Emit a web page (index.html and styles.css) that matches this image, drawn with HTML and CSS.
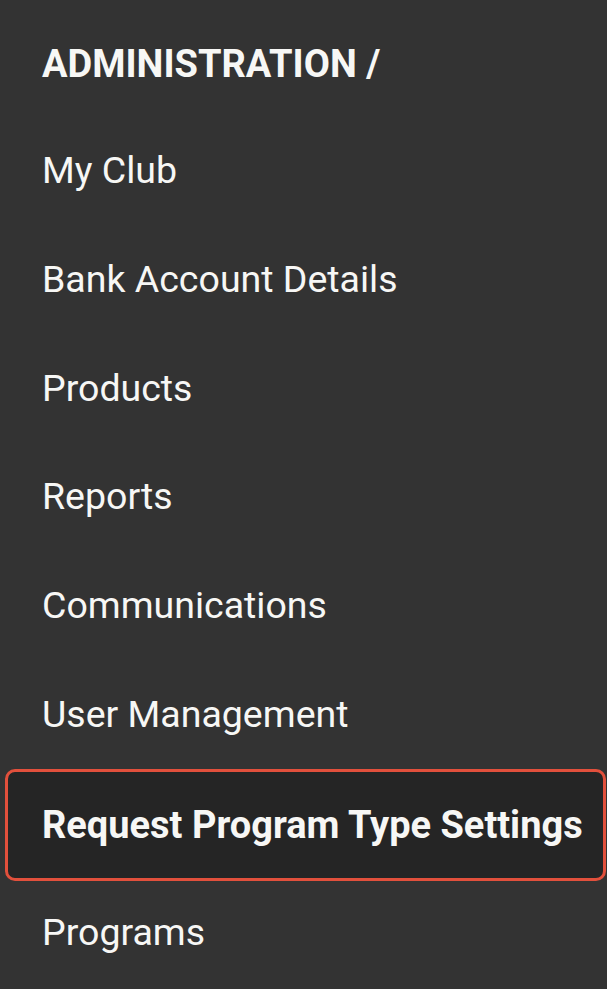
FILE: index.html
```html
<!DOCTYPE html>
<html lang="en">
<head>
    <meta charset="UTF-8">
    <meta name="viewport" content="width=device-width, initial-scale=1.0">
    <title>Administration</title>
    <link rel="stylesheet" href="styles.css">
</head>
<body>
    <nav class="sidebar">
        <div class="section-title">ADMINISTRATION /</div>
        <ul class="menu">
            <li class="menu-item">My Club</li>
            <li class="menu-item">Bank Account Details</li>
            <li class="menu-item">Products</li>
            <li class="menu-item">Reports</li>
            <li class="menu-item">Communications</li>
            <li class="menu-item">User Management</li>
            <li class="menu-item active">Request Program Type Settings</li>
            <li class="menu-item">Programs</li>
        </ul>
    </nav>
</body>
</html>
```

FILE: styles.css
```css
html, body {
    margin: 0;
    height: 100%;
}

body {
    background: #333333;
    font-family: Roboto, "Liberation Sans", Arial, sans-serif;
    color: #f7f7f5;
    overflow: hidden;
}

.sidebar {
    padding-top: 12px;
}

.section-title {
    height: 104px;
    display: flex;
    align-items: center;
    padding-left: 42px;
    font-size: 38px;
    font-weight: 700;
}

.menu {
    list-style: none;
    margin: 0;
    padding: 0;
}

.menu-item {
    height: 108.7px;
    display: flex;
    align-items: center;
    padding-left: 42px;
    font-size: 37.5px;
    box-sizing: border-box;
}

.menu-item.active {
    height: 112px;
    margin: 1px 1px -3px 5px;
    padding-left: 34px;
    border: 3px solid #e2503c;
    border-radius: 10px;
    background: #252525;
    font-size: 38px;
    font-weight: 700;
}
```
